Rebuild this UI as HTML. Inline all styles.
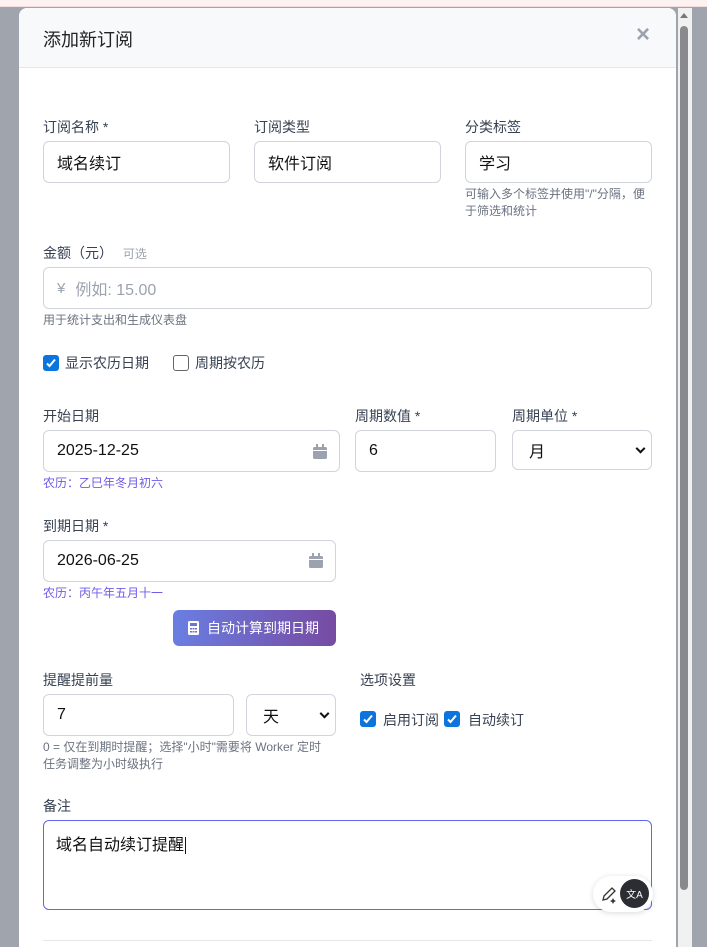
<!DOCTYPE html>
<html><head><meta charset="utf-8"><style>
*{box-sizing:border-box;margin:0;padding:0}
html,body{width:707px;height:947px;overflow:hidden}
body{background:#a0a4ac;font-family:"Liberation Sans","Noto Sans CJK SC",sans-serif;position:relative;color:#333}
.a{position:absolute}
.top{left:0;top:0;width:707px;height:7px;background:#fdf1f1;border-bottom:1px solid #f3dede}
.modal{left:19px;top:8px;width:657px;height:939px;background:#fff;border-radius:8px 8px 0 0;overflow:hidden}
.hdr{left:0;top:0;width:657px;height:60px;background:#f8f9fb;border-bottom:1px solid #e5e7eb}
.lbl{font-size:14px;color:#374151;white-space:nowrap}
.inp{border:1px solid #d1d5db;border-radius:6px;background:#fff;font-size:16px;color:#111;padding-left:13px;display:flex;align-items:center}
.help{font-size:12px;color:#6b7280;line-height:17px}
.lun{font-size:12px;color:#6d5ce8}
.cb{width:16px;height:16px;border-radius:3px;background:#0b74de;display:flex;align-items:center;justify-content:center}
.cbo{width:16px;height:16px;border-radius:3px;border:1.5px solid #666;background:#fff}
.sel:after{content:"";position:absolute;right:7px;top:50%;width:5px;height:5px;border-right:2px solid #111;border-bottom:2px solid #111;transform:translateY(-70%) rotate(45deg)}
</style></head><body>
<div class="a top"></div>
<div class="a" style="left:678px;top:8px;width:14px;height:939px;background:#f1f1f1"></div>
<div class="a" style="left:680px;top:26px;width:8px;height:864px;background:#8a8a8c;border-radius:4px"></div>
<div class="a" style="left:680px;top:13px;width:0;height:0;border-left:4px solid transparent;border-right:4px solid transparent;border-bottom:5px solid #777"></div>
<div class="a modal">
 <div class="a hdr"></div>
 <div class="a" style="left:24px;top:18px;font-size:18px;color:#222">添加新订阅</div>
 <div class="a" style="left:617px;top:13px;font-size:24px;color:#9ca3af;font-weight:bold">×</div>

 <div class="a lbl" style="left:24px;top:109px">订阅名称 *</div>
 <div class="a lbl" style="left:235px;top:109px">订阅类型</div>
 <div class="a lbl" style="left:446px;top:109px">分类标签</div>
 <div class="a inp" style="left:24px;top:133px;width:187px;height:42px">域名续订</div>
 <div class="a inp" style="left:235px;top:133px;width:187px;height:42px">软件订阅</div>
 <div class="a inp" style="left:446px;top:133px;width:187px;height:42px">学习</div>
 <div class="a help" style="left:446px;top:178px;width:190px">可输入多个标签并使用"/"分隔，便于筛选和统计</div>

 <div class="a lbl" style="left:24px;top:235px">金额（元） <span style="font-size:12px;color:#9ca3af;margin-left:6px">可选</span></div>
 <div class="a inp" style="left:24px;top:259px;width:609px;height:42px;color:#9ca3af"><span style="font-size:15px;margin-right:10px">¥</span>例如: 15.00</div>
 <div class="a help" style="left:24px;top:304px">用于统计支出和生成仪表盘</div>

 <div class="a cb" style="left:24px;top:347px"><svg width="12" height="12" viewBox="0 0 12 12"><path d="M2 6.5l2.5 2.5L10 2.5" stroke="#fff" stroke-width="2" fill="none"/></svg></div>
 <div class="a lbl" style="left:46px;top:345px">显示农历日期</div>
 <div class="a cbo" style="left:154px;top:347px"></div>
 <div class="a lbl" style="left:176px;top:345px">周期按农历</div>

 <div class="a lbl" style="left:24px;top:398px">开始日期</div>
 <div class="a lbl" style="left:336px;top:398px">周期数值 *</div>
 <div class="a lbl" style="left:493px;top:398px">周期单位 *</div>
 <div class="a inp" style="left:24px;top:422px;width:297px;height:42px">2025-12-25</div>
 <svg class="a" style="left:294px;top:436px" width="14" height="15" viewBox="0 0 14 15"><rect x="0" y="3" width="14" height="12" rx="1.5" fill="#9ca3af"/><rect x="3" y="0" width="2" height="4" fill="#9ca3af"/><rect x="9" y="0" width="2" height="4" fill="#9ca3af"/><rect x="0" y="6" width="14" height="1" fill="#fff"/></svg>
 <div class="a inp" style="left:336px;top:422px;width:141px;height:42px">6</div>
 <div class="a inp sel" style="left:493px;top:422px;width:140px;height:40px;padding-left:16px">月</div>
 <div class="a lun" style="left:24px;top:466px">农历：乙巳年冬月初六</div>

 <div class="a lbl" style="left:24px;top:508px">到期日期 *</div>
 <div class="a inp" style="left:24px;top:532px;width:293px;height:42px">2026-06-25</div>
 <svg class="a" style="left:290px;top:545px" width="14" height="15" viewBox="0 0 14 15"><rect x="0" y="3" width="14" height="12" rx="1.5" fill="#9ca3af"/><rect x="3" y="0" width="2" height="4" fill="#9ca3af"/><rect x="9" y="0" width="2" height="4" fill="#9ca3af"/><rect x="0" y="6" width="14" height="1" fill="#fff"/></svg>
 <div class="a lun" style="left:24px;top:576px">农历：丙午年五月十一</div>

 <div class="a" style="left:154px;top:602px;width:163px;height:36px;border-radius:6px;background:linear-gradient(90deg,#6a7ee2,#764ba2);color:#fff;font-size:14px;display:flex;align-items:center;padding-left:15px">
  <svg width="11" height="14" viewBox="0 0 11 14" style="margin-right:8px"><rect width="11" height="14" rx="1.5" fill="#fff"/><rect x="2" y="2" width="7" height="3" fill="#6d72d4"/><g fill="#6d72d4"><rect x="2" y="7" width="2" height="1.5"/><rect x="4.5" y="7" width="2" height="1.5"/><rect x="7" y="7" width="2" height="1.5"/><rect x="2" y="10" width="2" height="1.5"/><rect x="4.5" y="10" width="2" height="1.5"/><rect x="7" y="10" width="2" height="1.5"/></g></svg>自动计算到期日期</div>

 <div class="a lbl" style="left:24px;top:662px">提醒提前量</div>
 <div class="a lbl" style="left:341px;top:662px">选项设置</div>
 <div class="a inp" style="left:24px;top:686px;width:191px;height:42px">7</div>
 <div class="a inp sel" style="left:227px;top:686px;width:90px;height:42px;padding-left:16px">天</div>
 <div class="a cb" style="left:341px;top:703px"><svg width="12" height="12" viewBox="0 0 12 12"><path d="M2 6.5l2.5 2.5L10 2.5" stroke="#fff" stroke-width="2" fill="none"/></svg></div>
 <div class="a lbl" style="left:364px;top:702px">启用订阅</div>
 <div class="a cb" style="left:425px;top:703px"><svg width="12" height="12" viewBox="0 0 12 12"><path d="M2 6.5l2.5 2.5L10 2.5" stroke="#fff" stroke-width="2" fill="none"/></svg></div>
 <div class="a lbl" style="left:449px;top:702px">自动续订</div>
 <div class="a help" style="left:24px;top:731px;white-space:nowrap">0 = 仅在到期时提醒；选择"小时"需要将 Worker 定时<br>任务调整为小时级执行</div>

 <div class="a lbl" style="left:24px;top:788px">备注</div>
 <div class="a" style="left:24px;top:812px;width:609px;height:90px;border:1px solid #6366f1;border-radius:6px;font-size:16px;color:#111;padding:10px 12px">域名自动续订提醒<span style="border-left:1px solid #111;margin-left:1px"></span></div>
 <div class="a" style="left:574px;top:868px;width:60px;height:36px;border-radius:18px;background:#fff;box-shadow:0 1px 6px rgba(0,0,0,.15)"></div>
 <svg class="a" style="left:580px;top:876px" width="20" height="20" viewBox="0 0 20 20"><path d="M4 16l1-4 8-8 3 3-8 8z" stroke="#333" stroke-width="1.3" fill="none"/><path d="M14 14l1 2 2 1-2 1-1 2-1-2-2-1 2-1z" fill="#333"/></svg>
 <div class="a" style="left:601px;top:871px;width:29px;height:29px;border-radius:50%;background:#2b2d33;color:#fff;font-size:10px;display:flex;align-items:center;justify-content:center">文A</div>
 <div class="a" style="left:24px;top:932px;width:609px;height:1px;background:#e5e7eb"></div>
</div>
</body></html>
